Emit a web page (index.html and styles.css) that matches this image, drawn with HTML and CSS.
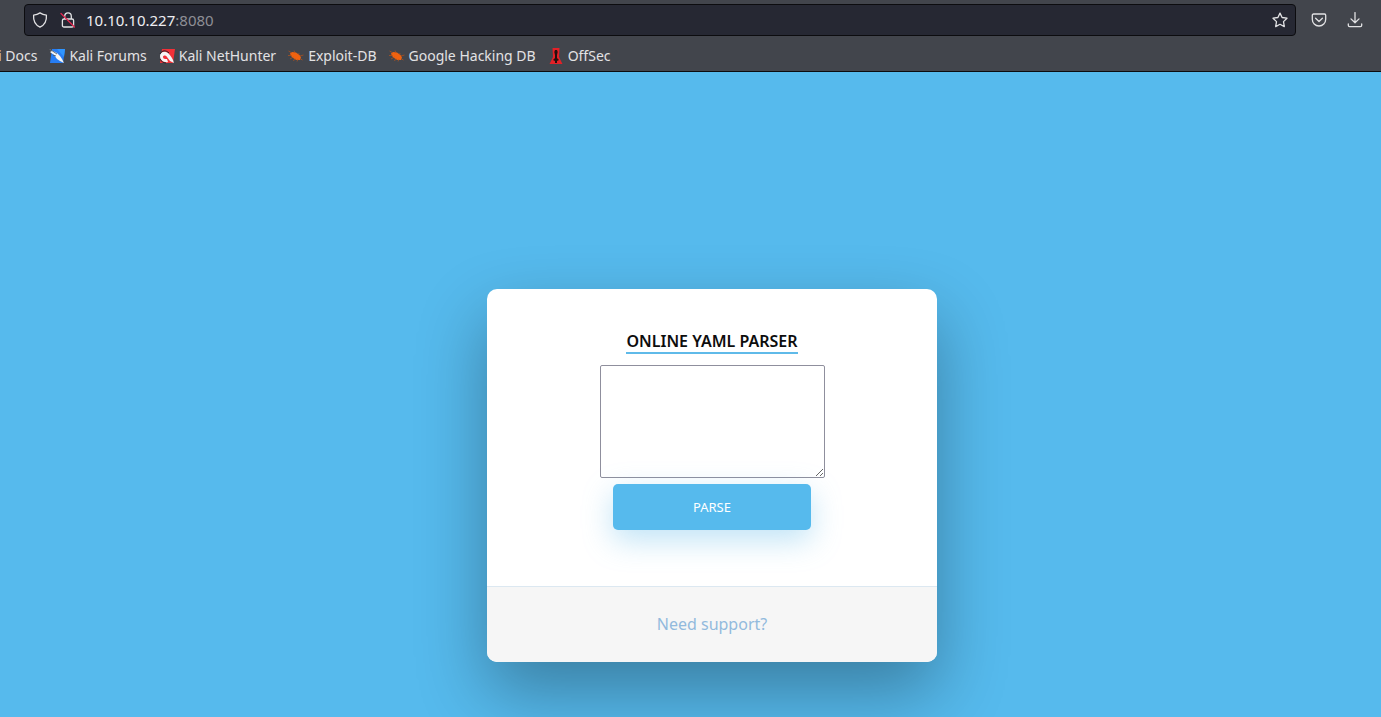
FILE: index.html
```html
<!DOCTYPE html>
<html lang="en">
<head>
<meta charset="utf-8">
<meta name="viewport" content="width=device-width, initial-scale=1">
<title>Online YAML Parser</title>
<link rel="stylesheet" href="styles.css">
</head>
<body>
<svg class="defs" aria-hidden="true">
  <symbol id="bug" viewBox="0 0 16 16">
    <path d="M2 5.500 4 4 8 4.500 11.500 7 13 9.500 12 12 8.500 12 5 10 3 8Z" fill="#f0620f"/>
    <path d="M.5 3 4 5M0 7.500 4 7.500M2 11 5.500 9M5 12.500 8 11M9 13.500 10 11M6 2.500 7 5M11 5 10.500 7M12 8l3.500-1M12.500 11 14.500 12" fill="none" stroke="#b9541a" stroke-width=".7"/>
  </symbol>
</svg>
<header class="browser">
  <div class="toolbar">
    <form class="urlbar">
      <button class="icon-button" type="button" aria-label="Tracking protection">
        <svg class="icon" viewBox="0 0 16 16"><path d="M8 .9c1.900 1.300 4 2 6.400 2.200.4 5-1.400 9.700-6.400 12-5-2.300-6.800-7-6.400-12C4 2.900 6.100 2.200 8 .9Z"/></svg>
      </button>
      <button class="icon-button" type="button" aria-label="Connection is not secure">
        <svg class="icon" viewBox="0 0 16 16"><path d="M4.700 7V4.200C4.700 2.100 6.200.8 8 .8s3.300 1.300 3.300 3.400V7M4 7h8c1 0 1.600.6 1.600 1.600v4.800c0 1-.6 1.600-1.600 1.600H4c-1 0-1.600-.6-1.600-1.600V8.600C2.400 7.600 3 7 4 7Z"/><path class="slash" d="M1 1.500 14.500 15"/></svg>
      </button>
      <span class="address">10.10.10.227<span class="port">:8080</span></span>
      <button class="icon-button" type="button" aria-label="Bookmark this page">
        <svg class="icon" viewBox="0 0 16 16"><path d="m8 1.100 2.100 4.400 4.900.7-3.500 3.400.8 5L8 12.300l-4.300 2.300.8-5L1 6.200l4.900-.7Z"/></svg>
      </button>
    </form>
    <button class="icon-button" type="button" aria-label="Save to Pocket">
      <svg class="icon" viewBox="0 0 16 16"><path d="M2.500 2h11c.7 0 1.200.5 1.200 1.200v4C14.700 11 11.800 14 8 14S1.300 11 1.300 7.200v-4C1.300 2.500 1.800 2 2.500 2Z"/><path d="M4.600 6.300 8 9.500l3.400-3.200"/></svg>
    </button>
    <button class="icon-button" type="button" aria-label="Downloads">
      <svg class="icon" viewBox="0 0 16 16"><path d="M8 .6v10M4 6.900l4 3.800 4-3.800M1.300 12v1.300c0 .8.500 1.300 1.300 1.300h10.800c.8 0 1.300-.5 1.300-1.300V12"/></svg>
    </button>
  </div>
  <nav class="bookmarks" aria-label="Bookmarks">
    <a href="#">i Docs</a>
    <a href="#"><svg class="favicon" viewBox="0 0 16 16"><path d="M3 1h13l-2 14H1Z" fill="#267df5"/><path d="M8 1h8l-1 8Z" fill="#2f95ff"/><path d="M0 1 4 3 8 5 11 8l2 3 2 4-4-2-3-2-3-4-4-3 2-1Z" fill="#f5f5f5"/><path d="m2 2 6 4M4 7l3 1" fill="none" stroke="#434a58" stroke-width=".8"/></svg>Kali Forums</a>
    <a href="#"><svg class="favicon" viewBox="0 0 16 16"><path d="M3 1h13l-2 14H1Z" fill="#f23038"/><path d="M1 8C1 5 4 3 7 4c3 1 5 4 7 8l1 3-4-2-3-4C7 7 4 7 4 9s2 2 4 2l1 3c-4 1-8-2-8-6Z" fill="#f5f5f5"/><path d="M1 6C3 2 7 2 10 5M1 11c1 2 3 4 6 4" fill="none" stroke="#24242a"/></svg>Kali NetHunter</a>
    <a href="#"><svg class="favicon" viewBox="0 0 16 16"><use href="#bug"/></svg>Exploit-DB</a>
    <a href="#"><svg class="favicon" viewBox="0 0 16 16"><use href="#bug"/></svg>Google Hacking DB</a>
    <a href="#"><svg class="favicon" viewBox="0 0 16 16"><path d="M4.500 0h7l-.5 9 3.500 7h-13L5 9Z" fill="#e32127"/><path d="M7 2h2l.7 2L9 7v3l2 2-2 1v2H7v-2l-2-1 2-2V7l-.7-3Z" fill="#24100f"/></svg>OffSec</a>
  </nav>
</header>
<main class="page">
  <section class="card">
    <form class="parser">
      <h2 class="title"><label for="yaml">Online YAML Parser</label></h2>
      <textarea class="source" id="yaml" name="data"></textarea>
      <button class="submit" type="submit">Parse</button>
    </form>
    <footer class="card-footer"><a href="#">Need support?</a></footer>
  </section>
</main>
</body>
</html>
```
FILE: styles.css
```css
* {
  box-sizing: border-box;
}

body {
  margin: 0;
  min-height: 100vh;
  display: flex;
  flex-direction: column;
  background: #56baed;
  font-family: "Noto Sans", sans-serif;
  font-size: 16px;
}

.defs {
  position: absolute;
  width: 0;
  height: 0;
}

.browser {
  background: #42454c;
  border-bottom: 1px solid #0c0c0f;
  color: #e2e2e4;
}

.toolbar {
  display: flex;
  align-items: center;
  gap: 12px;
  height: 40px;
  padding: 0 14px 0 24px;
}

.urlbar {
  flex: 1;
  display: flex;
  align-items: center;
  gap: 4px;
  height: 32px;
  margin-right: -1px;
  padding: 0 3px;
  background: #262833;
  border: 1px solid #0c0c0f;
  border-radius: 4px;
}

.address {
  flex: 1;
  margin-left: 2px;
  font-size: 15px;
  color: #eeeef2;
}

.port {
  color: #8e8f96;
}

.icon-button {
  display: flex;
  padding: 4px;
  border: 0;
  background: none;
  color: inherit;
}

.icon {
  width: 16px;
  height: 16px;
  fill: none;
  stroke: currentColor;
  stroke-width: 1.3;
  stroke-linecap: round;
  stroke-linejoin: round;
}

.icon .slash {
  stroke: #e22850;
}

.bookmarks {
  display: flex;
  align-items: center;
  gap: 12px;
  height: 31px;
  margin-left: -2px;
  font-size: 14px;
  white-space: nowrap;
}

.bookmarks a {
  display: flex;
  align-items: center;
  gap: 4px;
  color: inherit;
  text-decoration: none;
}

.favicon {
  width: 16px;
  height: 16px;
}

.page {
  flex: 1;
  display: flex;
  justify-content: center;
  align-items: flex-start;
  padding: 217px 0 0 43px;
}

.card {
  width: 100%;
  max-width: 450px;
  background: #ffffff;
  border-radius: 10px;
  box-shadow: 0 30px 70px 0 rgba(0, 0, 0, 0.32);
  overflow: hidden;
  text-align: center;
}

.parser {
  display: flex;
  flex-direction: column;
  align-items: center;
  padding: 41px 0 56px;
}

.title {
  margin: 0 0 11px;
  border-bottom: 2px solid #5fbae9;
  color: #0d0d0d;
  font-size: 16px;
  font-weight: 600;
  line-height: 22px;
  text-transform: uppercase;
}

.source {
  width: 225px;
  height: 113px;
  margin-bottom: 6px;
  border: 1px solid #8f8f9d;
  border-radius: 2px;
}

.submit {
  padding: 14px 80px;
  border: 0;
  border-radius: 5px;
  background: #56baed;
  box-shadow: 0 10px 30px 0 rgba(95, 186, 233, 0.4);
  color: #ffffff;
  font-family: inherit;
  font-size: 13px;
  line-height: 18px;
  text-transform: uppercase;
}

.card-footer {
  padding: 25px;
  background: #f6f6f6;
  border-top: 1px solid #dce8f1;
  line-height: 25px;
}

.card-footer a {
  color: #92badd;
  text-decoration: none;
}
```
